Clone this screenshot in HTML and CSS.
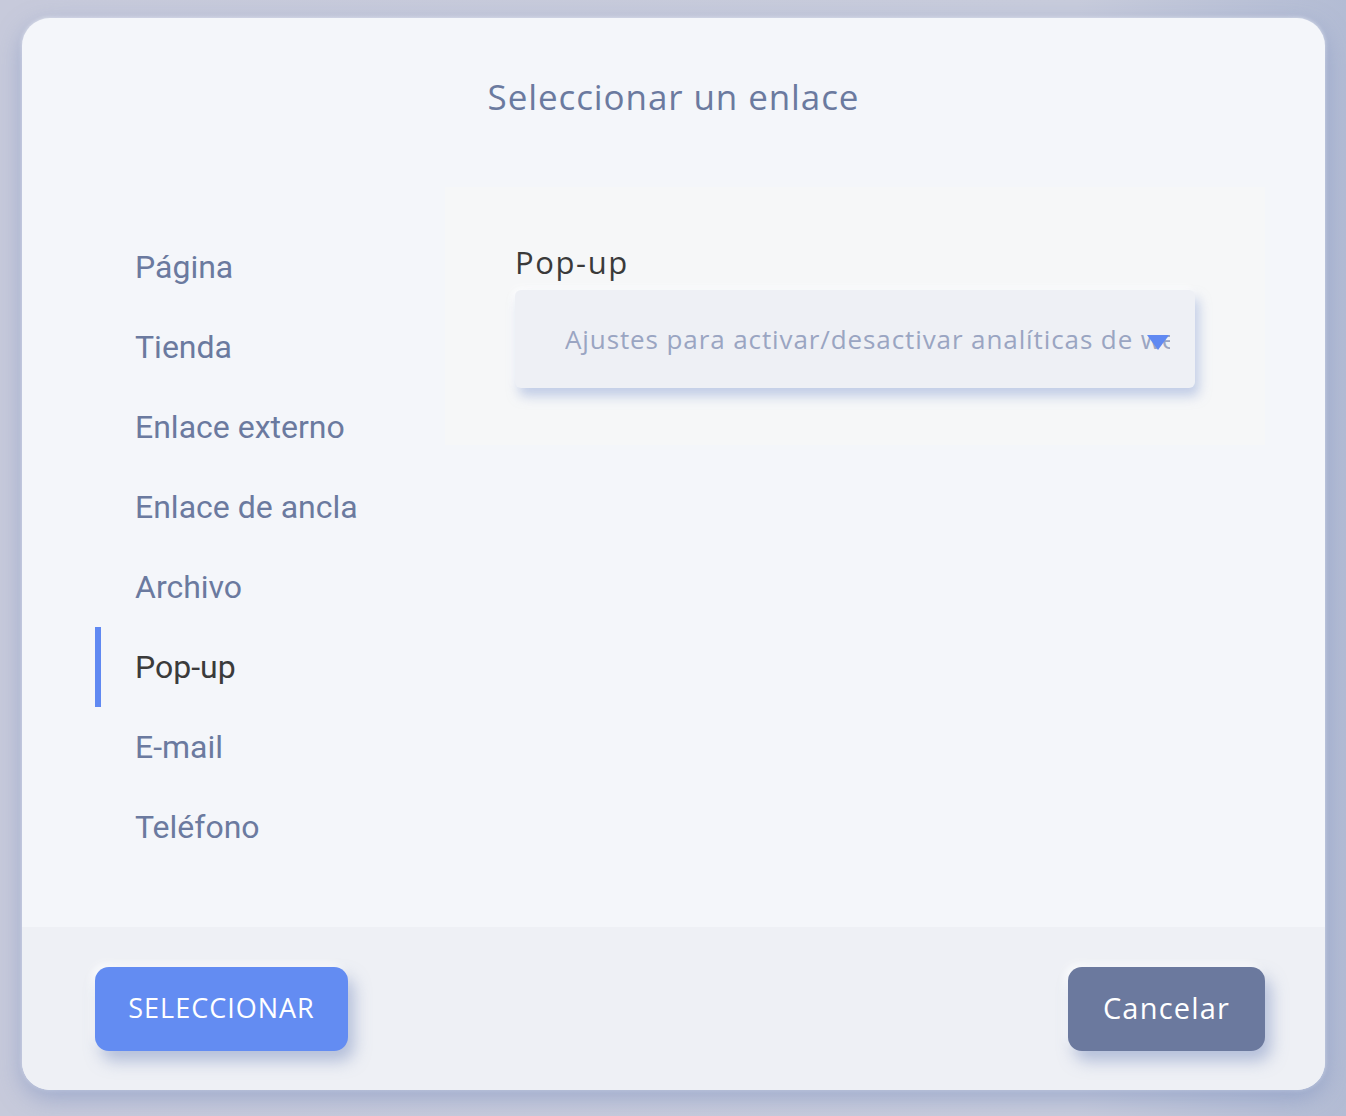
FILE: index.html
```html
<!DOCTYPE html>
<html lang="es">
<head>
<meta charset="utf-8">
<title>Seleccionar un enlace</title>
<link rel="stylesheet" href="styles.css">
</head>
<body>
<div class="backdrop">
  <div class="modal">
    <div class="header">
      <h1 class="title">Seleccionar un enlace</h1>
    </div>
    <div class="content">
      <ul class="nav">
        <li class="nav-item">Página</li>
        <li class="nav-item">Tienda</li>
        <li class="nav-item">Enlace externo</li>
        <li class="nav-item">Enlace de ancla</li>
        <li class="nav-item">Archivo</li>
        <li class="nav-item active">Pop-up</li>
        <li class="nav-item">E-mail</li>
        <li class="nav-item">Teléfono</li>
      </ul>
      <div class="panel">
        <div class="field-label">Pop-up</div>
        <div class="select">
          <span class="select-text">Ajustes para activar/desactivar analíticas de web</span>
          <svg class="caret" width="22" height="16" viewBox="0 0 22 16"><polygon points="0,0 22,0 11,15" fill="#6089f2"/></svg>
        </div>
      </div>
    </div>
    <div class="footer">
      <button class="btn btn-primary">SELECCIONAR</button>
      <button class="btn btn-secondary">Cancelar</button>
    </div>
  </div>
</div>
</body>
</html>
```
FILE: styles.css
```css
* { box-sizing: border-box; }
html, body { margin: 0; padding: 0; }
body {
  width: 1346px;
  height: 1116px;
  overflow: hidden;
  background: linear-gradient(90deg, #c7cadb 0%, #c8ccdc 80%, #b3bcd4 100%);
  font-family: "Open Sans", sans-serif;
}
.backdrop {
  padding: 18px 21px 0 22px;
}
.modal {
  width: 1303px;
  height: 1072px;
  background: #f4f6fa;
  border-radius: 28px;
  overflow: hidden;
  display: flex;
  flex-direction: column;
  box-shadow: 0 8px 24px rgba(120, 140, 190, 0.55), 0 0 4px rgba(255,255,255,0.8);
}
.header {
  height: 169px;
  padding-top: 57px;
  text-align: center;
}
.title {
  margin: 0;
  font-family: "Open Sans", sans-serif;
  font-weight: 400;
  font-size: 35px;
  line-height: 44px;
  letter-spacing: 0.9px;
  color: #6b7a9f;
}
.content {
  flex: 1;
  display: flex;
  padding-left: 73px;
  padding-right: 60px;
}
.nav {
  list-style: none;
  margin: 40px 0 0 0;
  padding: 0;
  width: 350px;
}
.nav-item {
  height: 80px;
  display: flex;
  align-items: center;
  padding-left: 40px;
  font-family: Roboto, sans-serif;
  font-size: 32px;
  color: #6b7a9f;
}
.nav-item.active {
  color: #3b3b3b;
  border-left: 6px solid #6089f2;
  padding-left: 34px;
}
.panel {
  flex: 1;
  height: 258px;
  background: #f6f7f8;
  padding: 55px 70px 0 70px;
}
.field-label {
  font-family: "Open Sans", sans-serif;
  font-size: 31px;
  line-height: 40px;
  letter-spacing: 1.6px;
  color: #3a3a3a;
  margin-bottom: 8px;
}
.select {
  position: relative;
  height: 98px;
  background: #eef0f5;
  border-radius: 6px;
  padding: 0 25px 0 50px;
  display: flex;
  align-items: center;
  box-shadow: 4px 8px 12px rgba(150, 170, 215, 0.55), -2px -2px 8px rgba(255,255,255,0.9);
}
.select-text {
  display: block;
  width: 605px;
  white-space: nowrap;
  overflow: hidden;
  font-family: "Open Sans", sans-serif;
  font-size: 26px;
  letter-spacing: 0.9px;
  color: #9aa5c2;
}
.caret {
  position: absolute;
  left: 632px;
  top: 45px;
}
.footer {
  height: 163px;
  background: #eef0f5;
  display: flex;
  justify-content: space-between;
  align-items: flex-start;
  padding: 40px 60px 0 73px;
}
.btn {
  height: 84px;
  border: none;
  border-radius: 14px;
  color: #ffffff;
  font-family: "Open Sans", sans-serif;
  box-shadow: 6px 10px 16px rgba(120, 140, 190, 0.5), -3px -3px 8px rgba(255,255,255,0.9);
  padding: 0 0 3px 0;
}
.btn-primary {
  width: 253px;
  background: #638cf2;
  font-size: 27px;
  letter-spacing: 1px;
}
.btn-secondary {
  width: 197px;
  background: #6b799e;
  font-size: 29px;
  letter-spacing: 1.2px;
}
```
